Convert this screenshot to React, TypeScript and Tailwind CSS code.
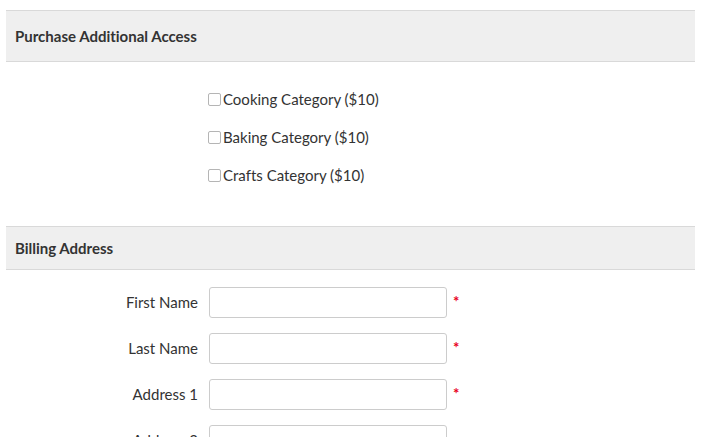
import { useState } from 'react'

const CATEGORIES = ['Cooking Category ($10)', 'Baking Category ($10)', 'Crafts Category ($10)']

const FIELDS = [
  { label: 'First Name', required: true },
  { label: 'Last Name', required: true },
  { label: 'Address 1', required: true },
  { label: 'Address 2', required: false },
]

function SectionHeader({ title, tall }: { title: string; tall?: boolean }) {
  return (
    <div
      className={`flex items-center border-y border-[#d9d9d9] bg-[#efefef] pl-[9px] ${tall ? 'h-[52px]' : 'h-[44px]'}`}
    >
      <h3 className="text-[15px] font-bold text-[#333]">{title}</h3>
    </div>
  )
}

export default function App() {
  const [checked, setChecked] = useState<boolean[]>([false, false, false])

  return (
    <div className="min-h-screen bg-white pl-[6px] pr-[6px] pt-[10px] font-['Lato','Liberation_Sans',sans-serif] text-[#333] [font-variant-ligatures:none]">
      <SectionHeader title="Purchase Additional Access" tall />

      <div className="flex flex-col pb-[32px] pl-[202px] pt-[18px]">
        {CATEGORIES.map((c, i) => (
          <label key={c} className="flex h-[38px] items-center text-[15px]">
            <input
              type="checkbox"
              checked={checked[i]}
              onChange={() => setChecked(checked.map((v, j) => (j === i ? !v : v)))}
              className="m-0 h-[13px] w-[13px] appearance-none rounded-[2px] border border-[#b5b5b5] bg-white"
            />
            <span className="ml-[2px]">{c}</span>
          </label>
        ))}
      </div>

      <SectionHeader title="Billing Address" />

      <div className="flex flex-col gap-[15px] pt-[17px]">
        {FIELDS.map((f) => (
          <div key={f.label} className="flex h-[31px] items-center">
            <span className="w-[192px] text-right text-[15px]">{f.label}</span>
            <input
              type="text"
              className="ml-[11px] h-[31px] w-[238px] rounded-[3px] border border-[#cccccc] bg-white px-2 text-[14px] outline-none"
            />
            {f.required && (
              <span className="ml-[6px] -mt-[2px] text-[15px] font-bold leading-none text-[#e8001c]">*</span>
            )}
          </div>
        ))}
      </div>
    </div>
  )
}
